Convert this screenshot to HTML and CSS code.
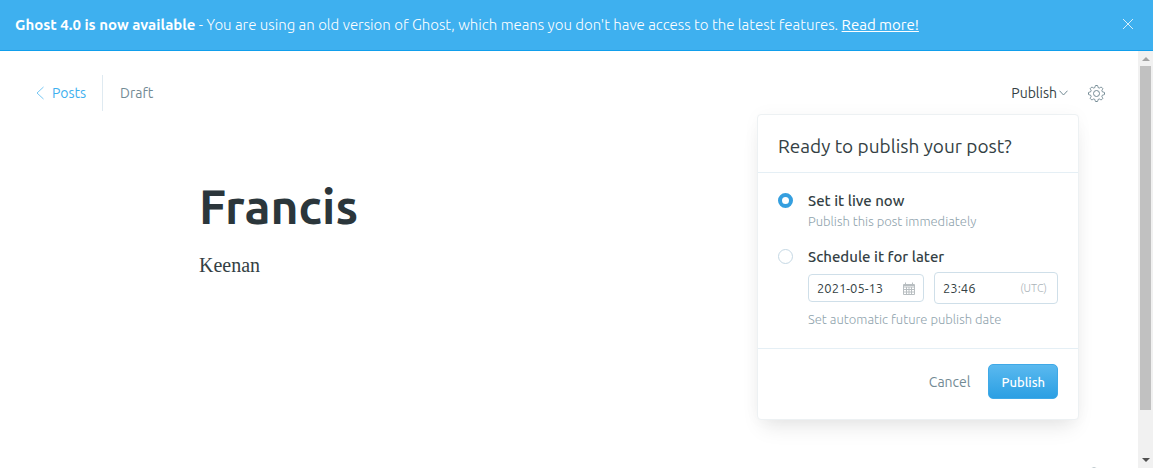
FILE: index.html
```html
<!DOCTYPE html>
<html lang="en">
<head>
<meta charset="utf-8">
<title>Francis - Editor</title>
<link rel="stylesheet" href="styles.css">
</head>
<body>
<aside class="banner">
  <p class="banner-text"><strong>Ghost 4.0 is now available</strong> - You are using an old version of Ghost, which means you don't have access to the latest features. <a href="#">Read more!</a></p>
  <button class="icon-button banner-close" aria-label="Close">
    <svg width="12" height="12" viewBox="0 0 12 12"><path d="M1 1l10 10M11 1L1 11"/></svg>
  </button>
</aside>
<div class="workspace">
  <main class="editor">
    <header class="toolbar">
      <a class="back" href="#"><svg width="8" height="14" viewBox="0 0 8 14"><path d="M7.500 1L1 7l6.500 6"/></svg>Posts</a>
      <span class="status">Draft</span>
      <div class="actions">
        <div class="publish-menu">
          <button class="publish-trigger">Publish<svg width="9" height="6" viewBox="0 0 9 6"><path d="M.5.7l4 4.300 4-4.300"/></svg></button>
          <form class="dropdown">
            <h2 class="dropdown-title">Ready to publish your post?</h2>
            <div class="options">
              <div class="option">
                <input class="radio" type="radio" name="when" id="now" checked>
                <div class="option-body">
                  <label class="option-label" for="now">Set it live now</label>
                  <p class="hint">Publish this post immediately</p>
                </div>
              </div>
              <div class="option">
                <input class="radio" type="radio" name="when" id="later">
                <div class="option-body">
                  <label class="option-label" for="later">Schedule it for later</label>
                  <div class="schedule">
                    <div class="field date-field">
                      <input type="text" value="2021-05-13" aria-label="Date">
                      <svg class="calendar" width="12" height="13" viewBox="0 0 12 13"><path d="M.5 2.500h11v10H.5zM.5 5h11M.5 7.500h11M.5 10h11M3.500 5v7.500M6 5v7.500M8.500 5v7.500M2.500.5v2M9.500.5v2M.5 3.500h11"/></svg>
                    </div>
                    <div class="field time-field">
                      <input type="text" value="23:46" aria-label="Time">
                      <span class="zone">(UTC)</span>
                    </div>
                  </div>
                  <p class="hint">Set automatic future publish date</p>
                </div>
              </div>
            </div>
            <footer class="dropdown-footer">
              <button class="cancel" type="button">Cancel</button>
              <button class="submit" type="button">Publish</button>
            </footer>
          </form>
        </div>
        <button class="icon-button settings" aria-label="Settings">
          <svg width="17" height="17" viewBox="0.5 0.5 17 17"><circle cx="9" cy="9" r="3"/><path d="M7.300 3.100C7.700 2.900 7.600 1 8 1h2c.4 0 .3 1.900.7 2.100l1 .4c.5.200 1.800-1.200 2.100-.9l1.500 1.500c.3.300-1.100 1.600-.9 2.100l.5 1.100c.2.400 2.100.3 2.100.7v2c0 .4-1.900.3-2.100.7l-.5 1.100c-.2.500 1.200 1.800.9 2.100l-1.500 1.500c-.3.300-1.600-1.100-2.100-.9l-1 .4c-.4.200-.3 2.100-.7 2.100H8c-.4 0-.3-1.900-.7-2.100l-1-.4c-.5-.2-1.800 1.200-2.100.9l-1.500-1.500c-.3-.3 1.100-1.600.9-2.100l-.5-1.100C2.900 10.300 1 10.400 1 10V8c0-.4 1.900-.3 2.100-.7l.5-1.100c.2-.5-1.200-1.800-.9-2.100l1.500-1.500c.3-.3 1.600 1.100 2.100.9z"/></svg>
        </button>
      </div>
    </header>
    <article class="post">
      <h1 class="post-title">Francis</h1>
      <p class="post-body">Keenan</p>
    </article>
    <button class="icon-button help" aria-label="Help">
      <svg width="18" height="18" viewBox="0 0 18 18"><circle cx="9" cy="9" r="8"/></svg>
    </button>
  </main>
  <div class="scrollbar" aria-hidden="true">
    <svg class="arrow-up" width="8" height="4" viewBox="0 0 8 4"><path d="M0 4l4-4 4 4z"/></svg>
    <div class="thumb"></div>
    <svg class="arrow-down" width="8" height="4" viewBox="0 0 8 4"><path d="M0 0l4 4 4-4z"/></svg>
  </div>
</div>
</body>
</html>
```
FILE: styles.css
```css
* { box-sizing: border-box; }

body {
  display: flex;
  flex-direction: column;
  height: 100vh;
  margin: 0;
  overflow: hidden;
  background: #fff;
  color: #343f44;
  font: 14px/20px Ubuntu, "Noto Sans", sans-serif;
}

h1, h2, p { margin: 0; }
button, input { font: inherit; color: inherit; }
button { padding: 0; border: 0; background: none; }
svg { display: block; fill: none; stroke: currentColor; }

.icon-button { display: flex; }

.banner {
  display: flex;
  align-items: center;
  justify-content: space-between;
  padding: 15px 19px 15px 15px;
  border-bottom: 1px solid #119fec;
  background: #3eb0ef;
  color: #fff;
}
.banner-text { font-size: 15px; font-weight: 300; }
.banner-text strong { font-weight: 700; }
.banner-text a { color: #fff; font-weight: 400; }
.banner-close { padding-bottom: 2px; }
.banner-close svg { opacity: 0.8; }

.workspace { display: flex; flex: 1; min-height: 0; }

.editor { position: relative; flex: 1; min-width: 0; }

.toolbar {
  display: flex;
  align-items: center;
  padding: 24px 33px 0 36px;
}
.back {
  display: flex;
  align-items: center;
  gap: 8px;
  padding: 8px 16px 8px 0;
  border-right: 1px solid #dfeaf1;
  color: #3eb0ef;
  text-decoration: none;
}
.back svg { opacity: 0.7; }
.status { padding-left: 17px; color: #738a94; }
.actions {
  display: flex;
  align-items: center;
  gap: 20px;
  margin-left: auto;
}
.settings { color: #738a94; }

.publish-menu { position: relative; }
.publish-trigger { display: flex; align-items: center; gap: 2px; }
.publish-trigger svg { color: #738a94; }

.dropdown {
  position: absolute;
  top: 31px;
  right: -11px;
  width: 322px;
  border: 1px solid #edf1f3;
  border-radius: 4px;
  background: #fff;
  box-shadow: 0 12px 20px -6px rgba(0, 0, 0, 0.1), 0 0 18px rgba(0, 0, 0, 0.03);
}
.dropdown-title {
  padding: 19px 20px 14px;
  border-bottom: 1px solid #e5eff5;
  font-size: 19px;
  line-height: 24px;
  font-weight: 400;
}
.options {
  display: grid;
  grid-template-columns: minmax(0, 1fr);
  gap: 16px;
  padding: 18px 20px 19px;
}
.option { display: flex; gap: 15px; }
.option-body { flex: 1; min-width: 0; }
.option-label { display: block; font-size: 15px; font-weight: 500; }
.radio {
  flex: none;
  width: 15px;
  height: 15px;
  margin: 2px 0 0;
  border: 1px solid #c5d8e4;
  border-radius: 50%;
  appearance: none;
  background: #fff;
}
.radio:checked { border: 4px solid #359fdf; }
.hint { color: #8fa3ad; font-size: 13px; font-weight: 300; }

.schedule {
  display: flex;
  align-items: center;
  gap: 10px;
  padding: 5px 0;
}
.field {
  display: flex;
  align-items: center;
  border: 1px solid #cfdfe9;
  border-radius: 4px;
  font-size: 13px;
}
.field input {
  flex: 1;
  min-width: 0;
  padding: 0;
  border: 0;
  outline: 0;
  background: none;
}
.date-field { width: 116px; height: 28px; padding: 0 8px; }
.time-field { flex: 1; min-width: 0; height: 32px; padding: 0 10px 0 8px; }
.calendar { color: #b8bec1; }
.zone { color: #abb4b9; font-size: 11px; font-weight: 300; }

.dropdown-footer {
  display: flex;
  align-items: center;
  justify-content: flex-end;
  gap: 18px;
  padding: 15px 20px 20px;
  border-top: 1px solid #e5eff5;
}
.cancel { color: #738a94; }
.submit {
  height: 35px;
  padding: 0 12px;
  border: 1px solid #3fa9e7;
  border-radius: 5px;
  background: linear-gradient(#5ab9ef, #2b9fe3);
  color: #fff;
  font-size: 13px;
  font-weight: 500;
}

.post { padding: 60px 199px 0; }
.post-title {
  color: #2b363b;
  font-size: 48px;
  line-height: 70px;
  font-weight: 700;
}
.post-body { padding-top: 8px; font: 20px/32px "Liberation Serif", serif; }

.help {
  position: absolute;
  right: 35px;
  bottom: -17px;
  color: #738a94;
}

.scrollbar {
  display: flex;
  flex-direction: column;
  align-items: center;
  width: 15px;
  padding: 6px 0;
  background: #f1f1f1;
}
.scrollbar svg { stroke: none; }
.arrow-up { fill: #a3a3a3; }
.arrow-down { margin-top: auto; fill: #505050; }
.thumb { width: 11px; height: 85%; margin-top: 5px; background: #c1c1c1; }
```
